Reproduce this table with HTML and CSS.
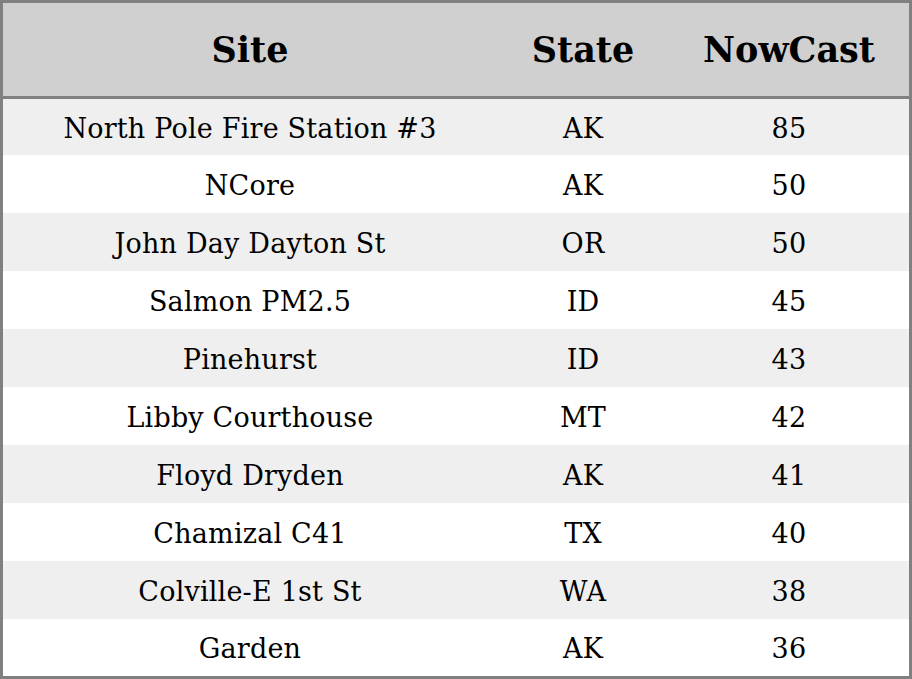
FILE: index.html
```html
<!DOCTYPE html>
<html>
<head>
<meta charset="utf-8">
<link rel="stylesheet" href="styles.css">
</head>
<body>
<table class="aq">
  <thead>
    <tr><th class="c-site">Site</th><th class="c-state">State</th><th class="c-now">NowCast</th></tr>
  </thead>
  <tbody>
    <tr><td>North Pole Fire Station #3</td><td>AK</td><td>85</td></tr>
    <tr><td>NCore</td><td>AK</td><td>50</td></tr>
    <tr><td>John Day Dayton St</td><td>OR</td><td>50</td></tr>
    <tr><td>Salmon PM2.5</td><td>ID</td><td>45</td></tr>
    <tr><td>Pinehurst</td><td>ID</td><td>43</td></tr>
    <tr><td>Libby Courthouse</td><td>MT</td><td>42</td></tr>
    <tr><td>Floyd Dryden</td><td>AK</td><td>41</td></tr>
    <tr><td>Chamizal C41</td><td>TX</td><td>40</td></tr>
    <tr><td>Colville-E 1st St</td><td>WA</td><td>38</td></tr>
    <tr><td>Garden</td><td>AK</td><td>36</td></tr>
  </tbody>
</table>
</body>
</html>
```
FILE: styles.css
```css
html, body {
  margin: 0;
  padding: 0;
  background: #ffffff;
}
.aq {
  width: 912px;
  border-collapse: collapse;
  border: 3px solid #808080;
  font-family: "DejaVu Serif", serif;
  color: #000;
  table-layout: fixed;
}
.aq th, .aq td {
  padding: 0;
  text-align: center;
  vertical-align: middle;
  line-height: 1;
}
.aq thead th {
  background: #d0d0d0;
  height: 93px;
  font-size: 35px;
  font-weight: bold;
  border-bottom: 3px solid #808080;
}
.c-site { width: 494px; }
.c-state { width: 172px; }
.c-now { width: 240px; }
.aq tbody td {
  font-size: 27px;
  letter-spacing: 0.2px;
  height: 56px;
  padding-top: 2px;
}
.aq tbody tr:nth-child(odd) td { background: #efefef; }
.aq tbody tr:first-child td { height: 54px; }
.aq tbody tr:last-child td { height: 55px; }
```
